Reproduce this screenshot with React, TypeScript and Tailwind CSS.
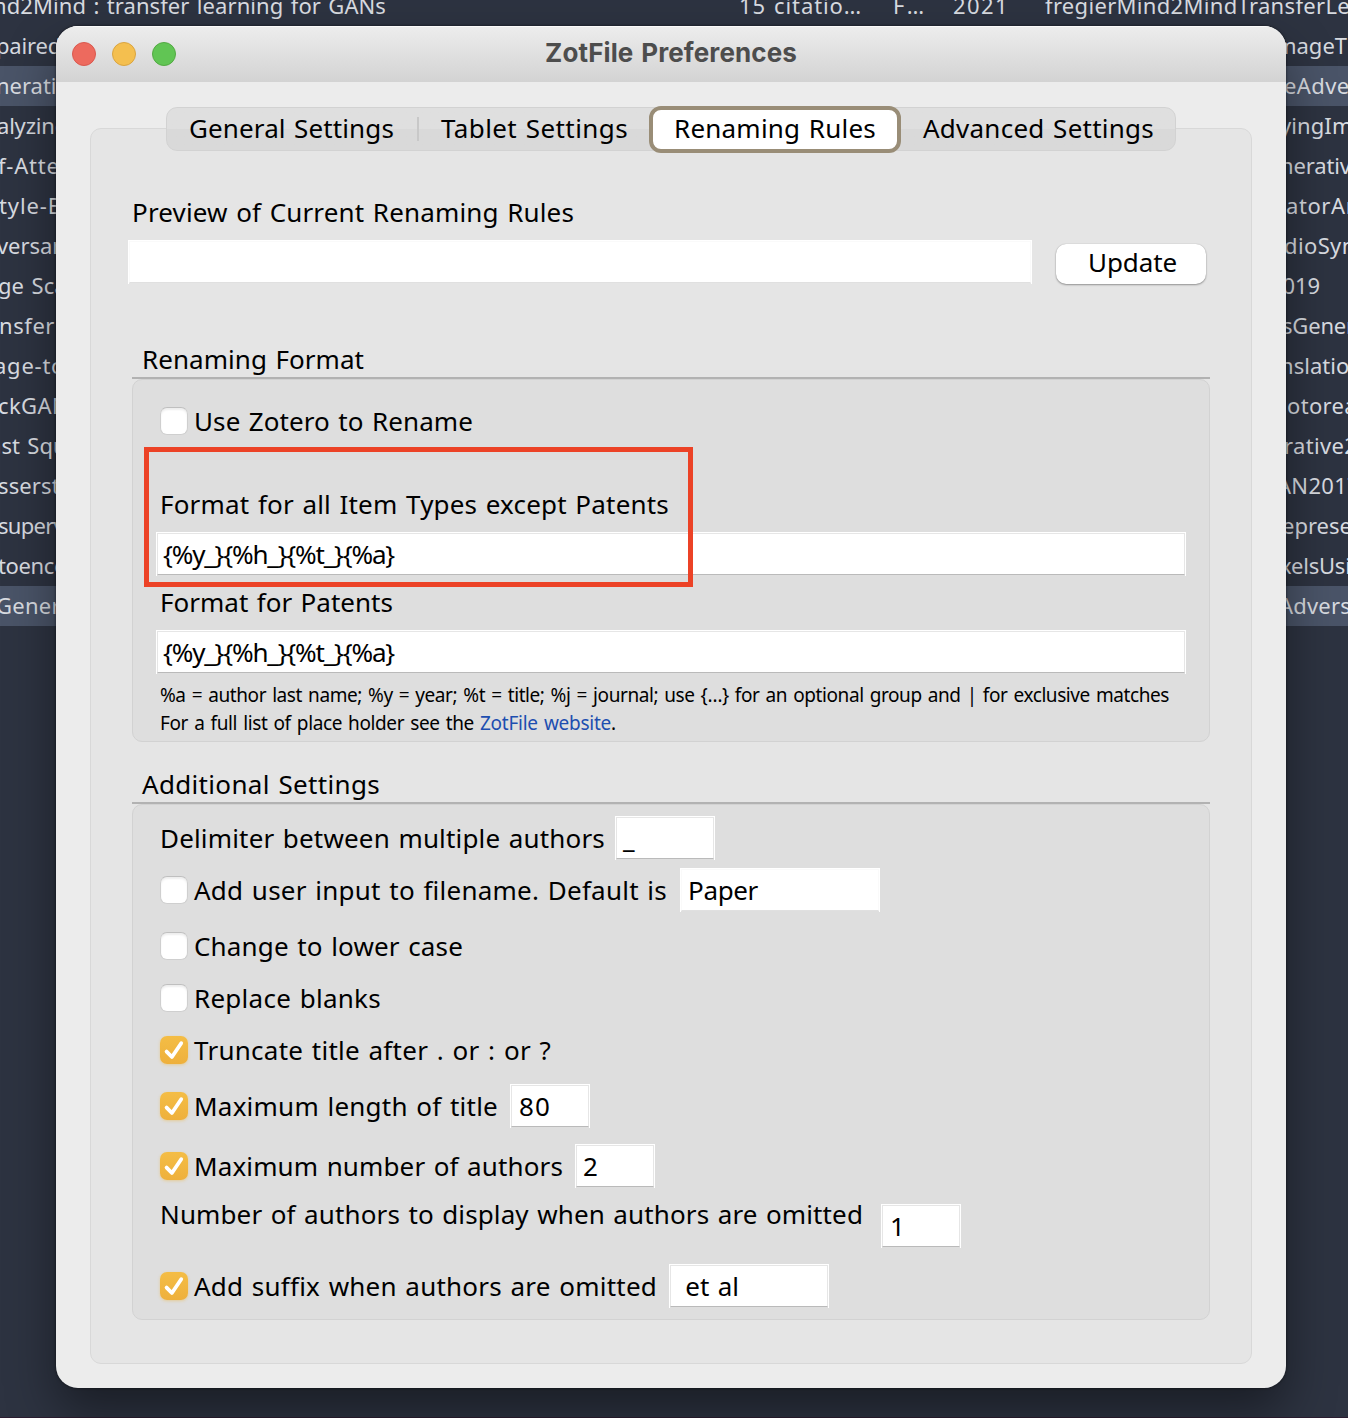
import { useLayoutEffect, useRef, useState } from "react";
import type { ReactNode } from "react";
import clsx from "clsx";

/* Text run whose tracking is adjusted so that it spans exactly `w` pixels. */
function Fit({ w, children, className }: { w: number; children: ReactNode; className?: string }) {
  const ref = useRef<HTMLSpanElement>(null);
  const [spacing, setSpacing] = useState(0);
  useLayoutEffect(() => {
    const el = ref.current;
    if (!el) return;
    el.style.letterSpacing = "0px";
    const natural = el.getBoundingClientRect().width;
    const count = (el.textContent || "").length;
    const next = (w - natural) / Math.max(1, count);
    el.style.letterSpacing = `${next}px`;
    setSpacing(next);
  }, [w]);
  return (
    <span ref={ref} style={{ letterSpacing: `${spacing}px` }} className={clsx("inline-block shrink-0 whitespace-pre", className)}>
      {children}
    </span>
  );
}

function Check({ on }: { on?: boolean }) {
  if (!on)
    return (
      <span className="block size-7 shrink-0 rounded-[7px] border border-[#cfcfcf] border-t-[#bfbfbf] bg-white shadow-[inset_0_2px_2px_rgba(0,0,0,0.07)]" />
    );
  return (
    <span className="block size-7 shrink-0 rounded-[7px] bg-linear-to-b from-[#f4bd45] to-[#eeb03c] shadow-[0_1px_3px_rgba(240,180,50,0.4)]">
      <svg viewBox="0 0 28 28" className="block size-7" fill="none" stroke="white" strokeWidth="3.8" strokeLinecap="round" strokeLinejoin="round">
        <path d="M6.6 15.6 L11.9 21 L21.2 7.2" />
      </svg>
    </span>
  );
}

function Field({ className, soft, children }: { className: string; soft?: boolean; children?: ReactNode }) {
  return (
    <div className={clsx("h-11 shrink-0 border-x border-t border-white pb-px", className)}>
      <div
        className={clsx(
          "flex h-[42px] items-center border bg-white pl-[6px]",
          soft ? "border-[#fafafa] border-b-[#e0e0e0]" : "border-[#e6e6e6] border-b-[#bababa]",
        )}
      >
        {children}
      </div>
    </div>
  );
}

/* Rows of the list behind the window: text, left edge, width. */
const leftRows: [string, number, number][] = [
  ["nd2Mind : transfer learning for GANs", -7, 393],
  ["paired", -4, 65],
  ["nerative", -4, 84],
  ["alyzing", -3, 71],
  ["f-Atten", -2, 76],
  ["tyle-Ba", -1, 77],
  ["versaria", -3, 82],
  ["ge Scale", -2, 87],
  ["nsfer", -1, 56],
  ["age-to-", -6, 79],
  ["ckGAN", -2, 71],
  ["ast Squa", -11, 90],
  ["sserstei", -2, 80],
  ["supervi", -2, 71],
  ["toencod", -2, 82],
  ["Genera", -4, 77],
];

const rightRows: [string, number, number][] = [
  ["fregierMind2MindTransferLe", 1045, 305],
  ["mageT", 1276, 71],
  ["eAdver", 1284, 75],
  ["yingIma", 1280, 85],
  ["nerative", 1280, 83],
  ["atorArc", 1286, 80],
  ["dioSynt", 1284, 80],
  ["2019", 1270, 50],
  ["sGener", 1282, 73],
  ["nslation", 1280, 83],
  ["otoreali", 1287, 82],
  ["rative20", 1284, 86],
  ["AN2017", 1277, 83],
  ["eprese", 1282, 70],
  ["xelsUsin", 1280, 84],
  ["Advers", 1279, 72],
];

function Backdrop() {
  return (
    <div className="h-full overflow-hidden border-b border-[#2c1d31] bg-[#2d3341] text-[22px] leading-[38px] text-[#d8dbe0]">
      <div className="-mt-[14px]">
        {leftRows.map(([text, x, w], i) => {
          const [rText, rx, rw] = rightRows[i];
          return (
            <div key={i} className={clsx("grid h-10 grid-cols-1 items-start overflow-hidden", (i === 2 || i === 15) && "bg-[#4a5468]")}>
              <div className="col-start-1 row-start-1 h-[38px]" style={{ marginLeft: x }}>
                <Fit w={w}>{text}</Fit>
              </div>
              {i === 0 && (
                <div className="col-start-1 row-start-1 flex h-[38px] pl-[739px]">
                  <div className="w-[154px]"><Fit w={123}>15 citatio…</Fit></div>
                  <div className="w-[60px]"><Fit w={35}>F…</Fit></div>
                  <Fit w={56}>2021</Fit>
                </div>
              )}
              <div className="col-start-1 row-start-1 h-[38px]" style={{ marginLeft: rx }}>
                <Fit w={rw}>{rText}</Fit>
              </div>
            </div>
          );
        })}
      </div>
    </div>
  );
}

function GroupTitle({ w, children }: { w: number; children: ReactNode }) {
  return (
    <div className="flex h-10 items-center border-b-2 border-[#b2b2b2] pt-[2px] pl-[10px]">
      <Fit w={w}>{children}</Fit>
    </div>
  );
}

/* Checkbox, its label of width `w`, and an optional field after it. */
function Option({ className, on, w, label, children }: { className: string; on?: boolean; w: number; label: string; children?: ReactNode }) {
  return (
    <div className={clsx("flex items-center", className)}>
      <Check on={on} />
      <div className="ml-[6px] flex items-center">
        <Fit w={w}>{label}</Fit>
        {children}
      </div>
    </div>
  );
}

const group = "relative rounded-[10px] border border-[#d2d2d2] bg-[#dedede] pl-[27px]";

function Preferences() {
  return (
    <div className="absolute top-[26px] left-14 h-[1362px] w-[1230px] overflow-hidden rounded-[22px] bg-[#ececec]">
      <div className="grid h-14 grid-cols-[1fr_auto_1fr] items-center bg-linear-to-b from-[#ededed] to-[#d3d3d3] pl-4 shadow-[inset_0_1px_0_#fafafa]">
        <div className="flex gap-4">
          <span className="size-6 rounded-full border border-[#d9594f] bg-[#ed6a5e]" />
          <span className="size-6 rounded-full border border-[#d9a441] bg-[#f4bf4f]" />
          <span className="size-6 rounded-full border border-[#53a943] bg-[#61c554]" />
        </div>
        <Fit w={252} className="-translate-x-2 -translate-y-px font-[Inter] text-[26px] leading-none font-bold text-[#4d4d4d]">ZotFile Preferences</Fit>
      </div>

      <div className="relative z-10 mt-[25px] ml-[110px] flex h-11 w-[1010px] items-center rounded-[11px] border border-[#d2d2d2] bg-linear-to-b from-[#dfdfdf] from-50% to-[#d9d9d9] to-50%">
        <div className="flex h-full w-[250px] items-center pb-[2px] pl-[22px]"><Fit w={205}>General Settings</Fit></div>
        <div className="h-6 w-0.5 bg-[#c8c8c8]" />
        <div className="flex h-full w-[230px] items-center pb-[2px] pl-[22px]"><Fit w={187}>Tablet Settings</Fit></div>
        <div className="flex h-[47px] w-[252px] shrink-0 items-center justify-center rounded-[12px] border-4 border-[#998d77] bg-white pb-[2px]"><Fit w={202}>Renaming Rules</Fit></div>
        <div className="flex h-full items-center pb-[2px] pl-[22px]"><Fit w={231}>Advanced Settings</Fit></div>
      </div>

      <div className="-mt-[23px] ml-[34px] h-[1236px] w-[1162px] rounded-[11px] border border-[#d8d8d8] bg-[#e5e5e5] pt-[63px] pl-[37px]">
        <div className="flex h-10 items-center pl-[4px]"><Fit w={442}>Preview of Current Renaming Rules</Fit></div>
        <div className="mt-2 flex">
          <Field soft className="w-[904px]" />
          <div className="mt-1 ml-6 flex h-10 w-[150px] items-center rounded-[10px] bg-white pb-[4px] pl-[32px] shadow-[0_1px_2px_rgba(0,0,0,0.35),0_0_1px_rgba(0,0,0,0.25)]">
            <Fit w={89}>Update</Fit>
          </div>
        </div>

        <div className="mt-[55px] ml-1 w-[1078px]">
          <GroupTitle w={222}>Renaming Format</GroupTitle>
          <div className={`${group} h-[363px] pt-[21px]`}>
            <Option className="h-10" w={279} label="Use Zotero to Rename" />
            <div className="mt-[43px] flex h-10 items-center"><Fit w={509}>Format for all Item Types except Patents</Fit></div>
            <Field className="mt-2 -ml-1 w-[1030px]"><Fit w={231} className="-ml-px">{"{%y_}{%h_}{%t_}{%a}"}</Fit></Field>
            <div className="mt-[6px] flex h-10 items-center"><Fit w={233}>Format for Patents</Fit></div>
            <Field className="mt-2 -ml-1 w-[1030px]"><Fit w={231} className="-ml-px">{"{%y_}{%h_}{%t_}{%a}"}</Fit></Field>
            <div className="mt-[7px] text-[19px] leading-7">
              <div><Fit w={1009}>{"%a = author last name; %y = year; %t = title; %j = journal; use {…} for an optional group and | for exclusive matches"}</Fit></div>
              <div className="flex">
                <Fit w={320}>{"For a full list of place holder see the "}</Fit>
                <Fit w={131} className="text-[#1d4eb0]">ZotFile website</Fit>
                <span>.</span>
              </div>
            </div>
            <div className="absolute top-[67px] left-[11px] h-[140px] w-[549px] border-[5px] border-[#ec4226]" />
          </div>

          <div className="mt-[22px]">
            <GroupTitle w={238}>Additional Settings</GroupTitle>
          </div>
          <div className={`${group} h-[516px] pt-[11px]`}>
            <div className="flex h-11 items-center">
              <div className="w-[455px]"><Fit w={445}>Delimiter between multiple authors</Fit></div>
              <Field className="w-[100px]"><Fit w={12}>_</Fit></Field>
            </div>
            <Option className="mt-2 h-11" w={473} label="Add user input to filename. Default is">
              <Field soft className="ml-[13px] w-[200px]"><Fit w={70}>Paper</Fit></Field>
            </Option>
            <Option className="mt-[14px] h-10" w={269} label="Change to lower case" />
            <Option className="mt-3 h-10" w={187} label="Replace blanks" />
            <Option className="mt-3 h-10" w={357} label="Truncate title after . or : or ?" on />
            <Option className="mt-[14px] h-11" w={304} label="Maximum length of title" on>
              <Field className="ml-[12px] w-20"><Fit w={32} className="ml-px">80</Fit></Field>
            </Option>
            <Option className="mt-4 h-11" w={369} label="Maximum number of authors" on>
              <Field className="ml-[12px] w-20"><Fit w={17}>2</Fit></Field>
            </Option>
            <div className="mt-4 flex h-11 items-start leading-5">
              <div className="w-[721px]"><Fit w={703}>Number of authors to display when authors are omitted</Fit></div>
              <Field className="w-20"><Fit w={17} className="ml-px">1</Fit></Field>
            </div>
            <Option className="mt-4 h-11" w={463} label="Add suffix when authors are omitted" on>
              <Field className="ml-[12px] w-40"><Fit w={62}>{" et al"}</Fit></Field>
            </Option>
          </div>
        </div>
      </div>
    </div>
  );
}

export default function App() {
  return (
    <div className="relative h-[1418px] w-[1348px] overflow-hidden font-['Noto_Sans',sans-serif] text-[26px] leading-10 text-black [word-spacing:0.06em]">
      <Backdrop />
      <div className="absolute top-[26px] left-14 h-[1362px] w-[1230px] rounded-[22px] shadow-[0_24px_50px_rgba(0,0,0,0.42),0_0_3px_rgba(0,0,0,0.6)]" />
      <Preferences />
    </div>
  );
}
